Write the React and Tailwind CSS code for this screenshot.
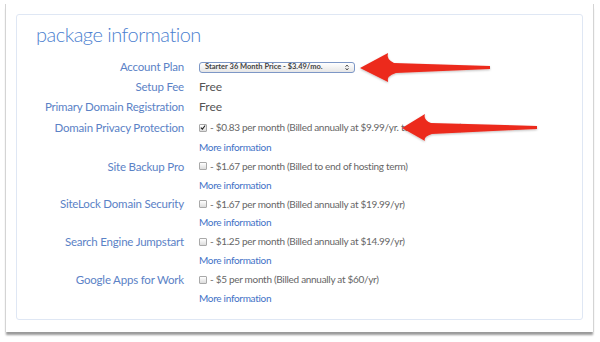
import React from 'react';

const rows = [
    { label: 'Site Backup Pro', text: '- $1.67 per month (Billed to end of hosting term)' },
    { label: 'SiteLock Domain Security', text: '- $1.67 per month (Billed annually at $19.99/yr)' },
    { label: 'Search Engine Jumpstart', text: '- $1.25 per month (Billed annually at $14.99/yr)' },
    { label: 'Google Apps for Work', text: '- $5 per month (Billed annually at $60/yr)' },
];

function Checkbox({ checked }) {
    return (
        <span className="inline-flex items-center justify-center w-[8px] h-[8px] border border-[#a9a9a9] rounded-[1px] bg-gradient-to-b from-white to-[#dcdcdc] mr-[3px] shrink-0">
            {checked && (
                <svg width="7" height="7" viewBox="0 0 7 7">
                    <path d="M1 3.6 L2.8 5.4 L6 1.2" fill="none" stroke="#222" strokeWidth="1.3" />
                </svg>
            )}
        </span>
    );
}

function Label({ children }) {
    return (
        <div className="w-[167px] shrink-0 text-right text-[11.5px] tracking-[-0.2px] text-[#5b82c6]">{children}</div>
    );
}

function Row({ label, children, h = 'h-[20px]' }) {
    return (
        <div className={`flex items-center ${h} gap-[15px]`}>
            <Label>{label}</Label>
            <div className="flex items-center text-[10px] tracking-[-0.3px] text-[#666]">{children}</div>
        </div>
    );
}

function MoreInfo() {
    return (
        <div className="flex items-center h-[18.75px] pl-[182px] text-[10px] tracking-[-0.3px] text-[#3f72c6]">More information</div>
    );
}

export default function App() {
    return (
        <div className="relative w-[600px] h-[342px] bg-white overflow-hidden" style={{ fontFamily: 'Lato, "Open Sans", sans-serif' }}>
            {/* screenshot frame */}
            <div className="ml-[5px] mt-[4px] w-[589px] h-[328px] bg-white border-x border-[#d4d4d4] shadow-[0_4px_2px_-1px_#9a9a9a] pt-[10px] pl-[10px]">
                {/* card */}
                <div className="w-[567px] h-[306px] border border-[#dfe7f4] rounded-[3px] pt-[5px]">
                    <h1 className="pl-[19px] text-[20px] tracking-[-0.5px] leading-[28px] font-light text-[#4b80d0] mb-[9px]">package information</h1>

                    <Row label="Account Plan">
                        <div className="flex items-center justify-between w-[156px] h-[11px] border border-[#7d97c6] rounded-[3px] bg-gradient-to-b from-white to-[#e6e6e6] px-[5px]">
                            <span className="text-[7.5px] font-bold tracking-normal text-[#444] leading-none">Starter 36 Month Price - $3.49/mo.</span>
                            <svg width="4" height="7" viewBox="0 0 4 7">
                                <path d="M0.5 2.8 L2 1 L3.5 2.8 M0.5 4.2 L2 6 L3.5 4.2" fill="none" stroke="#444" strokeWidth="0.9" />
                            </svg>
                        </div>
                    </Row>
                    <Row label="Setup Fee">
                        <span className="text-[12px] tracking-normal text-[#555]">Free</span>
                    </Row>
                    <Row label="Primary Domain Registration">
                        <span className="text-[12px] tracking-normal text-[#555]">Free</span>
                    </Row>
                    <Row label="Domain Privacy Protection" h="h-[21px]">
                        <Checkbox checked />
                        <span>- $0.83 per month (Billed annually at $9.99/yr. to end of term)</span>
                    </Row>
                    <MoreInfo />
                    {rows.map((r) => (
                        <div key={r.label}>
                            <Row label={r.label} h="h-[19px]">
                                <Checkbox />
                                <span>{r.text}</span>
                            </Row>
                            <MoreInfo />
                        </div>
                    ))}
                </div>
            </div>

            {/* red arrows drawn over the screenshot */}
            <svg className="absolute left-0 top-0 pointer-events-none" width="600" height="342" viewBox="0 0 600 342">
                <defs>
                    <filter id="sh" x="-10%" y="-30%" width="120%" height="160%">
                        <feDropShadow dx="0" dy="1" stdDeviation="1" floodColor="#000" floodOpacity="0.25" />
                    </filter>
                </defs>
                <path d="M360 68 L388 53 Q386 59 394 63 L490 66 L490 69 L396 73 Q386 76 388 82 Z" fill="#ec2a1d" filter="url(#sh)" />
                <path d="M402 128 L425 114 Q423 120 431 123 L537 126 L537 129 L432 134 Q423 137 425 141 Z" fill="#ec2a1d" filter="url(#sh)" />
            </svg>
        </div>
    );
}
